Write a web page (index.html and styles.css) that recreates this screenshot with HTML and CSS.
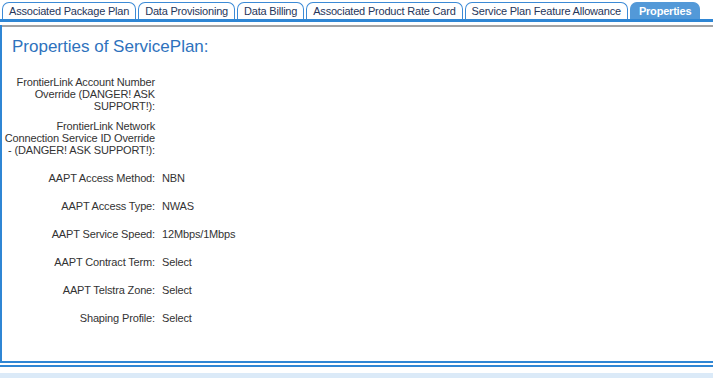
FILE: index.html
```html
<!DOCTYPE html>
<html>
<head>
<meta charset="utf-8">
<link rel="stylesheet" href="styles.css">
</head>
<body>
<div class="tabs">
  <div class="tab">Associated Package Plan</div>
  <div class="tab">Data Provisioning</div>
  <div class="tab">Data Billing</div>
  <div class="tab">Associated Product Rate Card</div>
  <div class="tab">Service Plan Feature Allowance</div>
  <div class="tab active">Properties</div>
</div>
<div class="panel">
  <div class="rule"></div>
  <h1 class="title">Properties of ServicePlan:</h1>
  <div class="props">
    <div class="row multi first"><div class="label">FrontierLink Account Number Override (DANGER! ASK SUPPORT!):</div><div class="value"></div></div>
    <div class="row multi second"><div class="label">FrontierLink Network Connection Service ID Override - (DANGER! ASK SUPPORT!):</div><div class="value"></div></div>
    <div class="row"><div class="label">AAPT Access Method:</div><div class="value">NBN</div></div>
    <div class="row"><div class="label">AAPT Access Type:</div><div class="value">NWAS</div></div>
    <div class="row"><div class="label">AAPT Service Speed:</div><div class="value">12Mbps/1Mbps</div></div>
    <div class="row"><div class="label">AAPT Contract Term:</div><div class="value">Select</div></div>
    <div class="row"><div class="label">AAPT Telstra Zone:</div><div class="value">Select</div></div>
    <div class="row"><div class="label">Shaping Profile:</div><div class="value">Select</div></div>
  </div>
</div>
<div class="line2"></div>
<div class="band"></div>
</body>
</html>
```
FILE: styles.css
```css
html, body {
  margin: 0;
  padding: 0;
  background: #fff;
  font-family: "Liberation Sans", Arial, sans-serif;
  overflow: hidden;
}
.tabs {
  display: flex;
  gap: 2px;
  padding: 2px 0 0 2px;
  border-bottom: 3px solid #2f86d4;
  height: 17px;
}
.tab {
  border: 1px solid #3b8ad6;
  border-bottom: none;
  border-radius: 7px 7px 0 0;
  padding: 0 6px;
  font-size: 11px;
  letter-spacing: -0.2px;
  line-height: 16px;
  color: #26365a;
  background: #fff;
  white-space: nowrap;
}
.tab.active {
  background: #5399d8;
  border-color: #5399d8;
  color: #fff;
  font-weight: bold;
  padding: 0 8px;
}
.panel {
  border-left: 2px solid #2f86d4;
  border-bottom: 2px solid #2f86d4;
  height: 338px;
  box-sizing: border-box;
}
.rule {
  margin-top: 3px;
  height: 2px;
  background: #a3a3a3;
}
.title {
  margin: 11px 0 0 10px;
  font-size: 17px;
  font-weight: normal;
  line-height: 18px;
  color: #2e72bd;
}
.props {
  margin-top: 20px;
  font-size: 11px;
  letter-spacing: -0.15px;
  line-height: 12px;
  color: #333;
}
.row {
  display: flex;
  gap: 7px;
  margin-bottom: 16px;
}
.row.first {
  margin-bottom: 8px;
}
.label {
  width: 151px;
  padding-left: 2px;
  text-align: right;
}
.line2 {
  margin-top: 2px;
  height: 2px;
  background: #2f86d4;
}
.band {
  margin-top: 6px;
  height: 8px;
  background: #dbeaf8;
}
```
